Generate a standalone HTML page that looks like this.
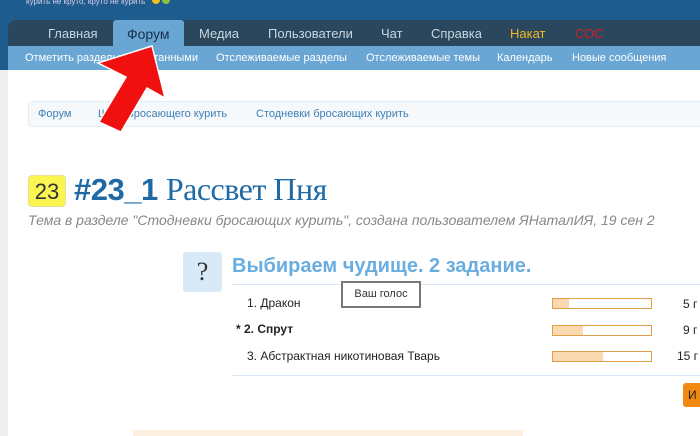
<!DOCTYPE html>
<html><head><meta charset="utf-8"><style>
*{margin:0;padding:0;box-sizing:border-box}
body{width:700px;height:436px;overflow:hidden;background:#fff;font-family:"Liberation Sans",sans-serif;position:relative}
.abs{position:absolute}
#hdr{left:0;top:0;width:700px;height:70px;background:#1d5c8c}
#nav{left:8px;top:20px;width:692px;height:26px;background:#2a475d;border-radius:8px 0 0 0}
#sub{left:8px;top:46px;width:692px;height:24px;background:#6aa6d3}
.n{position:absolute;top:26px;font-size:13px;color:#c9d6e0}
.s{position:absolute;top:52px;font-size:11px;color:#fff}
#tab{left:113px;top:20px;width:71px;height:26px;background:#6aa6d3;border-radius:3px 3px 0 0}
#strip{left:0;top:70px;width:8px;height:366px;background:#eeeeee}
#bc{left:28px;top:101px;width:680px;height:26px;background:#f5f9fc;border:1px solid #e2ecf4;border-radius:4px}
.b{position:absolute;top:108px;font-size:11px;color:#3e7fb5}
</style></head><body>
<div class="abs" id="hdr"></div>
<div class="abs" style="left:26px;top:-3px;font-size:8px;color:#dce;">курить не круто, круто не курить</div>
<div class="abs" style="left:152px;top:-4px;width:8px;height:8px;background:#f0c020;border-radius:50%"></div>
<div class="abs" style="left:162px;top:-4px;width:8px;height:8px;background:#8bc43f;border-radius:50%"></div>
<div class="abs" id="nav"></div>
<div class="abs" id="sub"></div>
<div class="abs" id="tab"></div>
<div class="n" style="left:48px">Главная</div>
<div class="n" style="left:127px;color:#17324a;font-size:14px">Форум</div>
<div class="n" style="left:199px">Медиа</div>
<div class="n" style="left:268px">Пользователи</div>
<div class="n" style="left:381px">Чат</div>
<div class="n" style="left:431px">Справка</div>
<div class="n" style="left:510px;color:#f2b724">Накат</div>
<div class="n" style="left:575px;color:#d01e1e">СОС</div>
<div class="s" style="left:25px">Отметить разделы прочитанными</div>
<div class="s" style="left:216px">Отслеживаемые разделы</div>
<div class="s" style="left:366px">Отслеживаемые темы</div>
<div class="s" style="left:497px">Календарь</div>
<div class="s" style="left:572px">Новые сообщения</div>
<div class="abs" id="strip"></div>
<div class="abs" id="bc"></div>
<div class="b" style="left:38px">Форум</div>
<div class="b" style="left:98px">Шаги бросающего курить</div>
<div class="b" style="left:256px">Стодневки бросающих курить</div>
<svg class="abs" style="left:0;top:0" width="700" height="436"><polygon points="152,46 165,98 147,88 121,132 99,122 126,77 98,63" fill="#f01010" stroke="#fff" stroke-width="1.5"/></svg>
<div class="abs" style="left:28px;top:175px;width:38px;height:32px;background:#fbf552;border:1px solid #e8e090;border-radius:4px;font-size:22px;color:#333;text-align:center;line-height:32px">23</div>
<div class="abs" style="left:74px;top:171px;font-size:31px;color:#1f6aa5;white-space:nowrap;letter-spacing:-0.5px"><b>#23_1</b> <span style="font-family:'Liberation Serif',serif;font-size:32px">Рассвет Пня</span></div>
<div class="abs" style="left:28px;top:212px;font-size:14px;font-style:italic;color:#888;white-space:nowrap">Тема в разделе "Стодневки бросающих курить", создана пользователем ЯНаталИЯ, 19 сен 2</div>
<div class="abs" style="left:183px;top:252px;width:39px;height:40px;background:#d8eaf8;border-radius:3px;font-size:26px;color:#333;text-align:center;line-height:40px;font-family:'Liberation Serif',serif">?</div>
<div class="abs" style="left:232px;top:255px;font-size:20px;font-weight:bold;color:#6aaee0;white-space:nowrap">Выбираем чудище. 2 задание.</div>
<div class="abs" style="left:232px;top:284px;width:470px;height:1px;background:#d9e8f4"></div>
<div class="abs" style="left:232px;top:375px;width:470px;height:1px;background:#d9e8f4"></div>
<div class="abs" style="left:247px;top:296px;font-size:12px;color:#222">1. Дракон</div>
<div class="abs" style="left:236px;top:322px;font-size:12px;color:#222;font-weight:bold">* 2. Спрут</div>
<div class="abs" style="left:247px;top:349px;font-size:12px;color:#222">3. Абстрактная никотиновая Тварь</div>
<div class="abs" style="left:552px;top:298px;width:100px;height:11px;border:1px solid #e0a048;background:#fff"><div style="width:16px;height:9px;background:#fad8b0"></div></div>
<div class="abs" style="left:552px;top:325px;width:100px;height:11px;border:1px solid #e0a048;background:#fff"><div style="width:30px;height:9px;background:#fad8b0"></div></div>
<div class="abs" style="left:552px;top:351px;width:100px;height:11px;border:1px solid #e0a048;background:#fff"><div style="width:50px;height:9px;background:#fad8b0"></div></div>
<div class="abs" style="left:683px;top:297px;font-size:12px;color:#222">5 г</div>
<div class="abs" style="left:683px;top:323px;font-size:12px;color:#222">9 г</div>
<div class="abs" style="left:677px;top:349px;font-size:12px;color:#222">15 г</div>
<div class="abs" style="left:341px;top:281px;width:80px;height:27px;background:#fff;border:2px solid #777;font-size:11px;color:#333;text-align:center;line-height:23px">Ваш голос</div>
<div class="abs" style="left:683px;top:383px;width:20px;height:24px;background:#f08a10;border-radius:3px 0 0 3px;font-size:12px;color:#222;padding:5px 0 0 5px">И</div>
<div class="abs" style="left:133px;top:430px;width:390px;height:6px;background:#fdf0e0"></div>
</body></html>
